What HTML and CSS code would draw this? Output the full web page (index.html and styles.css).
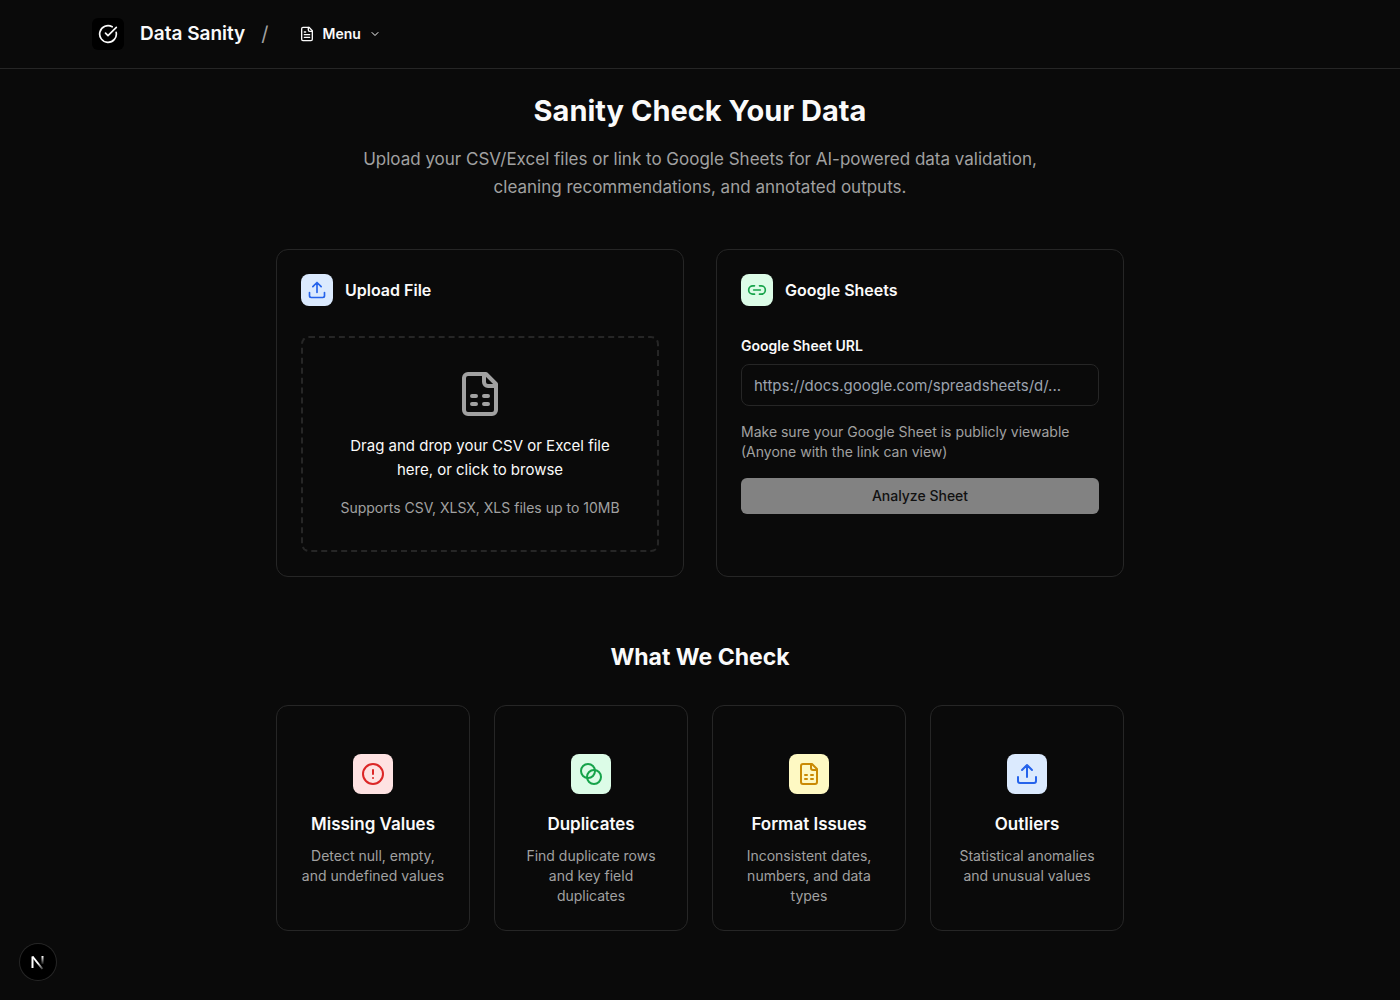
FILE: index.html
```html
<!DOCTYPE html>
<html lang="en">
<head>
<meta charset="utf-8">
<meta name="viewport" content="width=device-width, initial-scale=1">
<title>Data Sanity</title>
<link rel="stylesheet" href="styles.css">
</head>
<body>
<svg class="sprite" aria-hidden="true">
  <symbol id="upload" viewBox="0 0 24 24"><path d="M12 15V3M7 8l5-5 5 5M3 15v4a2 2 0 0 0 2 2h14a2 2 0 0 0 2-2v-4"/></symbol>
  <symbol id="spreadsheet" viewBox="0 0 24 24"><path d="M15 2H6a2 2 0 0 0-2 2v16a2 2 0 0 0 2 2h12a2 2 0 0 0 2-2V7Z"/><path d="M14 2v4a2 2 0 0 0 2 2h4"/><path d="M8 13h2M14 13h2M8 17h2M14 17h2"/></symbol>
</svg>

<header class="topbar">
  <div class="topbar-inner">
    <a class="brand" href="#">
      <span class="brand-mark"><svg class="icon icon-20" viewBox="0 0 24 24"><path d="M21.8 10A10 10 0 1 1 17 3.34"/><path d="m9 11 3 3L22 4"/></svg></span>
      <span class="brand-name">Data Sanity</span>
    </a>
    <span class="slash">/</span>
    <button class="menu-button" type="button">
      <svg class="icon icon-16" viewBox="0 0 24 24"><path d="M15 2H6a2 2 0 0 0-2 2v16a2 2 0 0 0 2 2h12a2 2 0 0 0 2-2V7Z"/><path d="M14 2v4a2 2 0 0 0 2 2h4M10 9H8M16 13H8M16 17H8"/></svg>
      <span>Menu</span>
      <svg class="icon icon-12" viewBox="0 0 24 24"><path d="m6 9 6 6 6-6"/></svg>
    </button>
  </div>
</header>

<main class="page">
  <section class="intro">
    <h1>Sanity Check Your Data</h1>
    <p>Upload your CSV/Excel files or link to Google Sheets for AI-powered data validation, cleaning recommendations, and annotated outputs.</p>
  </section>

  <section class="sources">
    <article class="card source">
      <div class="source-head">
        <span class="tile blue"><svg class="icon icon-20"><use href="#upload"/></svg></span>
        <h2>Upload File</h2>
      </div>
      <button class="dropzone" type="button">
        <svg class="icon icon-48"><use href="#spreadsheet"/></svg>
        <span class="drop-title">Drag and drop your CSV or Excel file here, or click to browse</span>
        <span class="drop-note">Supports CSV, XLSX, XLS files up to 10MB</span>
      </button>
    </article>

    <article class="card source">
      <div class="source-head">
        <span class="tile green"><svg class="icon icon-20" viewBox="0 0 24 24"><path d="M9 17H7A5 5 0 0 1 7 7h2M15 7h2a5 5 0 1 1 0 10h-2M8 12h8"/></svg></span>
        <h2>Google Sheets</h2>
      </div>
      <form class="sheet-form">
        <label for="sheet-url">Google Sheet URL</label>
        <input id="sheet-url" type="url" placeholder="https://docs.google.com/spreadsheets/d/...">
        <p>Make sure your Google Sheet is publicly viewable (Anyone with the link can view)</p>
        <button class="analyze" type="submit" disabled>Analyze Sheet</button>
      </form>
    </article>
  </section>

  <section class="checks">
    <h2>What We Check</h2>
    <div class="check-grid">
      <article class="card check">
        <span class="tile large red"><svg class="icon icon-24" viewBox="0 0 24 24"><circle cx="12" cy="12" r="10"/><path d="M12 8v4M12 16h.01"/></svg></span>
        <h3>Missing Values</h3>
        <p>Detect null, empty, and undefined values</p>
      </article>
      <article class="card check">
        <span class="tile large green"><svg class="icon icon-24" viewBox="0 0 24 24"><circle cx="9" cy="9" r="7"/><circle cx="15" cy="15" r="7"/></svg></span>
        <h3>Duplicates</h3>
        <p>Find duplicate rows and key field duplicates</p>
      </article>
      <article class="card check">
        <span class="tile large yellow"><svg class="icon icon-24"><use href="#spreadsheet"/></svg></span>
        <h3>Format Issues</h3>
        <p>Inconsistent dates, numbers, and data types</p>
      </article>
      <article class="card check">
        <span class="tile large blue"><svg class="icon icon-24"><use href="#upload"/></svg></span>
        <h3>Outliers</h3>
        <p>Statistical anomalies and unusual values</p>
      </article>
    </div>
  </section>
</main>

<button class="dev-badge" type="button" aria-label="Open developer tools">
  <svg viewBox="0 0 36 36">
    <defs>
      <linearGradient id="fade-diagonal" x1="18" y1="19" x2="23" y2="25" gradientUnits="userSpaceOnUse"><stop stop-color="#fff"/><stop offset="1" stop-color="#fff" stop-opacity=".2"/></linearGradient>
      <linearGradient id="fade-stem" x1="0" y1="12" x2="0" y2="21" gradientUnits="userSpaceOnUse"><stop stop-color="#fff"/><stop offset="1" stop-color="#fff" stop-opacity="0"/></linearGradient>
    </defs>
    <path d="M12.500 24V12.500" stroke="#fff" stroke-width="2"/>
    <path d="M12.500 12.500l10 12.500" stroke="url(#fade-diagonal)" stroke-width="2"/>
    <path d="M22.500 12v8" stroke="url(#fade-stem)" stroke-width="2"/>
  </svg>
</button>
</body>
</html>
```
FILE: styles.css
```css
* {
  box-sizing: border-box;
}

body {
  margin: 0;
  min-height: 100vh;
  background: #0a0a0a;
  color: #fafafa;
  font: 16px/24px Inter, "Liberation Sans", sans-serif;
}

h1, h2, h3, p {
  margin: 0;
}

button, input {
  font: inherit;
  color: inherit;
}

.sprite {
  position: absolute;
  width: 0;
  height: 0;
}

.icon {
  display: block;
  flex: none;
  fill: none;
  stroke: currentColor;
  stroke-width: 2;
  stroke-linecap: round;
  stroke-linejoin: round;
}

.icon-12 { width: 12px; height: 12px; }
.icon-16 { width: 16px; height: 16px; }
.icon-20 { width: 20px; height: 20px; }
.icon-24 { width: 24px; height: 24px; }
.icon-48 { width: 48px; height: 48px; }

.topbar {
  border-bottom: 1px solid #262626;
}

.topbar-inner {
  display: flex;
  align-items: center;
  gap: 16px;
  max-width: 1280px;
  margin: 0 auto;
  padding: 16px 32px;
}

.brand {
  display: flex;
  align-items: center;
  gap: 16px;
  color: inherit;
  text-decoration: none;
}

.brand-mark {
  display: grid;
  place-items: center;
  width: 32px;
  height: 32px;
  border-radius: 6px;
  background: #000;
}

.brand-name {
  font-size: 19px;
  line-height: 28px;
  font-weight: 600;
}

.slash {
  color: #a1a1a1;
  font-size: 20px;
  line-height: 28px;
}

.menu-button {
  display: flex;
  align-items: center;
  gap: 8px;
  height: 36px;
  padding: 0 14px;
  border: 0;
  border-radius: 6px;
  background: transparent;
  font-size: 14px;
  line-height: 20px;
  font-weight: 600;
}

.page {
  max-width: 896px;
  margin: 0 auto;
  padding: 24px;
}

.intro {
  margin-bottom: 48px;
  text-align: center;
}

.intro h1 {
  margin-bottom: 16px;
  font-size: 29px;
  line-height: 36px;
  font-weight: 700;
}

.intro p {
  max-width: 704px;
  margin: 0 auto;
  color: #a1a1a1;
  font-size: 17px;
  line-height: 28px;
}

.card {
  border: 1px solid #262626;
  border-radius: 12px;
}

.sources {
  display: grid;
  grid-template-columns: repeat(auto-fit, minmax(320px, 1fr));
  gap: 32px;
}

.source {
  padding: 24px;
}

.source-head {
  display: flex;
  align-items: center;
  gap: 12px;
  margin-bottom: 30px;
}

.source-head h2 {
  font-size: 16px;
  line-height: 24px;
  font-weight: 600;
}

.tile {
  display: grid;
  place-items: center;
  width: 32px;
  height: 32px;
  border-radius: 8px;
}

.tile.large {
  width: 40px;
  height: 40px;
}

.blue { background: #dbeafe; color: #2563eb; }
.green { background: #dcfce7; color: #16a34a; }
.red { background: #fee2e2; color: #dc2626; }
.yellow { background: #fef9c3; color: #ca8a04; }

.dropzone {
  display: flex;
  flex-direction: column;
  align-items: center;
  gap: 16px;
  width: 100%;
  padding: 32px;
  border: 2px dashed #262626;
  border-radius: 8px;
  background: transparent;
  color: #a1a1a1;
  cursor: pointer;
}

.drop-title {
  max-width: 280px;
  color: #fafafa;
  font-size: 15px;
}

.drop-note,
.sheet-form,
.check p {
  font-size: 14px;
  line-height: 20px;
}

.sheet-form {
  display: flex;
  flex-direction: column;
}

.sheet-form label {
  margin-bottom: 8px;
  font-weight: 600;
}

.sheet-form input {
  width: 100%;
  height: 42px;
  padding: 8px 12px;
  border: 1px solid #262626;
  border-radius: 8px;
  background: #0a0a0a;
  font-size: 15px;
}

.sheet-form input::placeholder {
  color: #9ca3af;
}

.sheet-form p {
  margin: 16px 0;
  color: #a1a1a1;
}

.analyze {
  height: 36px;
  padding: 8px 16px;
  border: 0;
  border-radius: 6px;
  background: #828282;
  color: #111;
  font-weight: 500;
}

.checks {
  margin-top: 64px;
}

.checks > h2 {
  margin-bottom: 32px;
  font-size: 23px;
  line-height: 32px;
  font-weight: 700;
  text-align: center;
}

.check-grid {
  display: grid;
  grid-template-columns: repeat(auto-fit, minmax(180px, 1fr));
  gap: 24px;
}

.check {
  display: flex;
  flex-direction: column;
  align-items: center;
  padding: 48px 24px 24px;
  text-align: center;
}

.check h3 {
  margin: 16px 0 8px;
  font-size: 17px;
  line-height: 28px;
  font-weight: 600;
  white-space: nowrap;
}

.check p {
  color: #a1a1a1;
}

.dev-badge {
  position: fixed;
  bottom: 20px;
  left: 20px;
  width: 36px;
  height: 36px;
  padding: 0;
  border: 0;
  border-radius: 50%;
  background: #000;
  box-shadow: 0 0 0 1px #262626;
}

.dev-badge svg {
  display: block;
  width: 36px;
  height: 36px;
}
```
